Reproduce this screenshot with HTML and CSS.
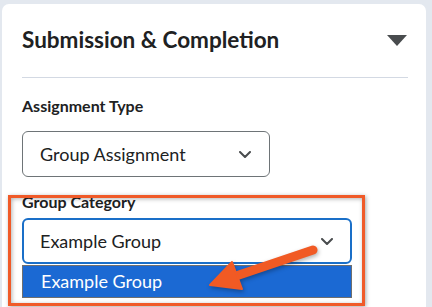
FILE: index.html
```html
<!DOCTYPE html>
<html lang="en">
<head>
    <meta charset="UTF-8">
    <meta name="viewport" content="width=device-width, initial-scale=1.0">
    <title>Submission &amp; Completion</title>
    <link rel="stylesheet" href="styles.css">
</head>
<body>
    <div class="card">
        <div class="card-header">
            <h2>Submission &amp; Completion</h2>
            <span class="toggle"></span>
        </div>
        <div class="field first">
            <label>Assignment Type</label>
            <div class="select narrow">
                <span>Group Assignment</span>
                <svg class="chevron" width="12" height="7" viewBox="0 0 12 7"><path d="M1 1l5 5 5-5" fill="none" stroke="#494c4e" stroke-width="2" stroke-linecap="round" stroke-linejoin="round"/></svg>
            </div>
        </div>
        <div class="field second">
            <label>Group Category</label>
            <div class="select wide focused">
                <span>Example Group</span>
                <svg class="chevron" width="12" height="7" viewBox="0 0 12 7"><path d="M1 1l5 5 5-5" fill="none" stroke="#494c4e" stroke-width="2" stroke-linecap="round" stroke-linejoin="round"/></svg>
            </div>
            <div class="option">Example Group</div>
        </div>
    </div>
    <!-- annotation overlays -->
    <div class="callout"></div>
    <svg class="arrow" width="120" height="60" viewBox="0 0 120 60">
        <line x1="113" y1="10" x2="36" y2="36" stroke="#f15a24" stroke-width="9" stroke-linecap="round"/>
        <polygon points="10,45 32,22 42,49" fill="#f15a24" stroke="#f15a24" stroke-width="2" stroke-linejoin="round"/>
    </svg>
</body>
</html>
```

FILE: styles.css
```css
body {
    margin: 0;
    height: 307px;
    overflow: hidden;
    background-color: #e3e8ef;
    font-family: Lato, "Noto Sans", sans-serif;
    color: #202122;
}
.card {
    margin: 4px 0 0 2px;
    width: 386px;
    height: 281px;
    padding: 22px 18px 0 20px;
    background-color: #ffffff;
    border-radius: 7px 7px 0 0;
}
.card-header {
    display: flex;
    align-items: center;
    justify-content: space-between;
    height: 28px;
    padding-bottom: 23px;
    border-bottom: 1px solid #d3d9e3;
}
.card-header h2 {
    margin: 0;
    font-size: 22.5px;
    line-height: 28px;
    font-weight: 700;
}
.toggle {
    width: 0;
    height: 0;
    margin-right: 1px;
    border-left: 10px solid transparent;
    border-right: 10px solid transparent;
    border-top: 11px solid #494c4e;
}
.field label {
    display: block;
    font-size: 16px;
    line-height: 20px;
    font-weight: 700;
}
.field.first {
    padding-top: 18px;
}
.field.second {
    padding-top: 15px;
}
.select {
    display: flex;
    align-items: center;
    justify-content: space-between;
    box-sizing: border-box;
    height: 46px;
    padding: 0 18px 0 17px;
    border: 1px solid #6e7477;
    border-radius: 6px;
    font-size: 18px;
}
.field.first .select {
    margin-top: 15px;
    width: 248px;
}
.select.wide {
    margin-top: 6px;
    width: 330px;
}
.select.focused {
    border: 2px solid #1a6fc8;
    padding: 0 17px 0 16px;
}
.option {
    box-sizing: border-box;
    width: 330px;
    height: 33px;
    margin-top: 1px;
    padding-left: 18px;
    border: 1px solid #6f6f6f;
    background-color: #1b69d3;
    color: #ffffff;
    font-size: 18px;
    line-height: 30px;
}
.callout {
    position: absolute;
    left: 8px;
    top: 195px;
    width: 351px;
    height: 105px;
    border: 3px solid #f05a28;
    box-shadow: 1px 1px 4px rgba(0, 0, 0, 0.35), inset 1px 1px 4px rgba(0, 0, 0, 0.3);
}
.arrow {
    position: absolute;
    left: 200px;
    top: 240px;
    filter: drop-shadow(1px 2px 2px rgba(0, 0, 0, 0.3));
}
```
